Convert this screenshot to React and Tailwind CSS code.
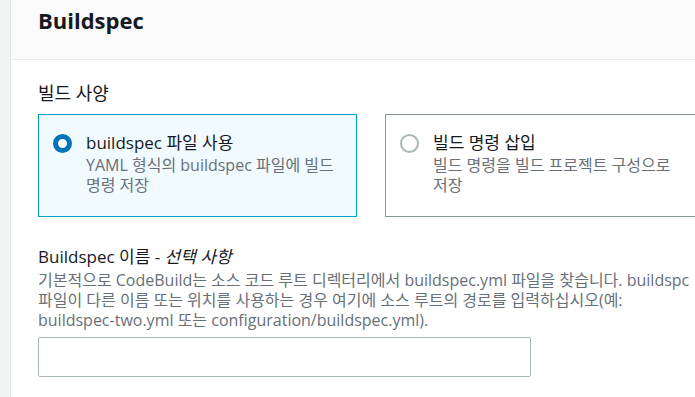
import React from "react";

const FONT = "font-['Open_Sans','Noto_Sans_CJK_KR',sans-serif]";

const Radio = ({ checked }) =>
  checked ? (
    <span className="mt-[3px] h-[19px] w-[19px] shrink-0 rounded-full border-[5px] border-[#0073bb] bg-white" />
  ) : (
    <span className="mt-[3px] h-[19px] w-[19px] shrink-0 rounded-full border-2 border-[#aab7b8] bg-white" />
  );

const Tile = ({ checked, title, lines }) => (
  <div
    className={`flex gap-[14px] border pl-[14px] pr-4 pt-[16px] pb-[21px] ${
      checked ? "border-[#00a1c9] bg-[#f1faff]" : "border-[#879596] bg-white"
    }`}
  >
    <Radio checked={checked} />
    <div className="flex flex-col">
      <p className="text-[17px] leading-[24px] text-[#16191f] whitespace-nowrap">{title}</p>
      <p className="text-[16px] leading-[20px] text-[#687078] whitespace-nowrap">
        {lines[0]}
        <br />
        {lines[1]}
      </p>
    </div>
  </div>
);

const App = () => {
  return (
    <div className={`flex h-[397px] w-[695px] overflow-hidden bg-white ${FONT}`}>
      <div className="w-[11px] shrink-0 border-r border-[#e4e7e7] bg-[#f2f3f3]" />
      <div className="flex min-w-[760px] flex-col">
        <div className="h-[60px] border-b border-[#eaeded] bg-[#fafafa] pl-[27px] pt-[5px]">
          <h2 className="text-[22px] font-bold leading-[30px] text-[#16191f]">Buildspec</h2>
        </div>
        <div className="flex flex-col pl-[27px] pt-[22px]">
          <p className="text-[18px] leading-[22px] text-[#16191f]">빌드 사양</p>
          <div className="mt-[10px] grid grid-cols-[319px_330px] gap-[28px]">
            <Tile
              checked
              title="buildspec 파일 사용"
              lines={["YAML 형식의 buildspec 파일에 빌드", "명령 저장"]}
            />
            <Tile
              title="빌드 명령 삽입"
              lines={["빌드 명령을 빌드 프로젝트 구성으로", "저장"]}
            />
          </div>
          <p className="mt-[29px] text-[17px] leading-[22px] text-[#16191f]">
            Buildspec 이름 - <i>선택 사항</i>
          </p>
          <p className="mt-[2px] text-[16px] leading-[20px] text-[#687078] whitespace-nowrap">
            기본적으로 CodeBuild는 소스 코드 루트 디렉터리에서 buildspec.yml 파일을 찾습니다. buildspc
            <br />
            파일이 다른 이름 또는 위치를 사용하는 경우 여기에 소스 루트의 경로를 입력하십시오(예:
            <br />
            buildspec-two.yml 또는 configuration/buildspec.yml).
          </p>
          <input
            type="text"
            className="mt-[7px] h-[40px] w-[493px] rounded-[2px] border border-[#aab7b8] bg-white px-3 text-[16px] outline-none"
          />
        </div>
      </div>
    </div>
  );
};

export default App;
